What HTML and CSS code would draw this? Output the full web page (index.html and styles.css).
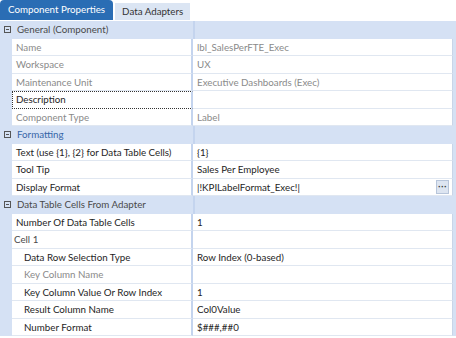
FILE: index.html
```html
<!DOCTYPE html>
<html lang="en">
<head>
  <meta charset="UTF-8">
  <title>Component Properties</title>
  <link rel="stylesheet" href="styles.css">
</head>
<body>
  <div class="tabs">
    <div class="tab active">Component Properties</div>
    <div class="tab">Data Adapters</div>
  </div>

  <div class="grid">
    <div class="cat"><span class="toggle"></span><span class="cat-name">General (Component)</span><span class="cat-rest"></span></div>
    <div class="row"><div class="name muted">Name</div><div class="value muted">lbl_SalesPerFTE_Exec</div></div>
    <div class="row"><div class="name muted">Workspace</div><div class="value muted">UX</div></div>
    <div class="row"><div class="name muted">Maintenance Unit</div><div class="value muted">Executive Dashboards (Exec)</div></div>
    <div class="row"><div class="name focus">Description</div><div class="value"></div></div>
    <div class="row"><div class="name muted">Component Type</div><div class="value muted">Label</div></div>

    <div class="cat"><span class="toggle"></span><span class="cat-name blue">Formatting</span><span class="cat-rest"></span></div>
    <div class="row"><div class="name">Text (use {1}, {2} for Data Table Cells)</div><div class="value">{1}</div></div>
    <div class="row"><div class="name">Tool Tip</div><div class="value">Sales Per Employee</div></div>
    <div class="row"><div class="name">Display Format</div><div class="value edit"><span>|!KPILabelFormat_Exec!|</span><button class="dots">&middot;&middot;&middot;</button></div></div>

    <div class="cat"><span class="toggle"></span><span class="cat-name">Data Table Cells From Adapter</span><span class="cat-rest"></span></div>
    <div class="row"><div class="name">Number Of Data Table Cells</div><div class="value">1</div></div>
    <div class="row"><div class="name group">Cell 1</div><div class="value"></div></div>
    <div class="row"><div class="name sub">Data Row Selection Type</div><div class="value">Row Index (0-based)</div></div>
    <div class="row"><div class="name sub muted">Key Column Name</div><div class="value"></div></div>
    <div class="row"><div class="name sub">Key Column Value Or Row Index</div><div class="value">1</div></div>
    <div class="row"><div class="name sub">Result Column Name</div><div class="value">Col0Value</div></div>
    <div class="row"><div class="name sub">Number Format</div><div class="value">$###,##0</div></div>
  </div>
</body>
</html>
```

FILE: styles.css
```css
body {
  margin: 0;
  font-family: Lato, "Liberation Sans", sans-serif;
  font-size: 9.75px;
  color: #1e1e1e;
  background-color: white;
}

.tabs {
  display: flex;
  align-items: flex-end;
  gap: 2px;
  height: 20px;
  margin-bottom: 1px;
}

.tab {
  padding: 0 7px;
  height: 17px;
  line-height: 17px;
  background-color: #dbe5f3;
  color: #333;
  font-size: 9.75px;
}

.tab.active {
  height: 20px;
  line-height: 19px;
  padding: 0 8px;
  background-color: #2a6db4;
  color: white;
  border-radius: 4px 4px 0 0;
}

.grid {
  background-color: #d5e1f4;
}

.cat, .row {
  display: flex;
  height: 17.5px;
  box-sizing: border-box;
}

.cat {
  align-items: center;
}

.toggle {
  width: 7px;
  height: 7px;
  margin: 0 6px 0 4px;
  border: 1px solid #555;
  box-sizing: border-box;
  position: relative;
}

.toggle::after {
  content: "";
  position: absolute;
  left: 1px;
  right: 1px;
  top: 2px;
  height: 1px;
  background-color: #555;
}

.cat-name {
  width: 176px;
  color: #4a4a4a;
  border-right: 2px solid #c4d4ee;
  height: 100%;
  line-height: 17px;
}

.cat-name.blue {
  color: #3566a8;
}

.row {
  padding-left: 12px;
}

.name, .value {
  background-color: white;
  border-bottom: 1px solid #e0e7f1;
  line-height: 16px;
  white-space: nowrap;
  overflow: hidden;
}

.name {
  width: 181px;
  padding-left: 4px;
  box-sizing: border-box;
  border-right: 2px solid #c4d4ee;
  flex-shrink: 0;
}

.value {
  flex: 1;
  padding-left: 4px;
  margin-right: 3px;
  border-right: 1px solid #c9d5e8;
}

.muted {
  color: #8a8a8a;
}

.name.focus {
  border: 1px dotted #333;
  border-right: 2px solid #c4d4ee;
  padding-left: 3px;
  line-height: 15px;
}

.name.group {
  padding-left: 2px;
  color: #4a4a4a;
}

.name.sub {
  padding-left: 12px;
}

.value.edit {
  display: flex;
  align-items: center;
  justify-content: space-between;
}

.dots {
  width: 13px;
  height: 14px;
  margin-right: 3px;
  padding: 0;
  border: 1px solid #b7c5da;
  background-color: #dde5f1;
  color: #333;
  font-size: 9px;
  line-height: 10px;
  font-weight: bold;
}
```
